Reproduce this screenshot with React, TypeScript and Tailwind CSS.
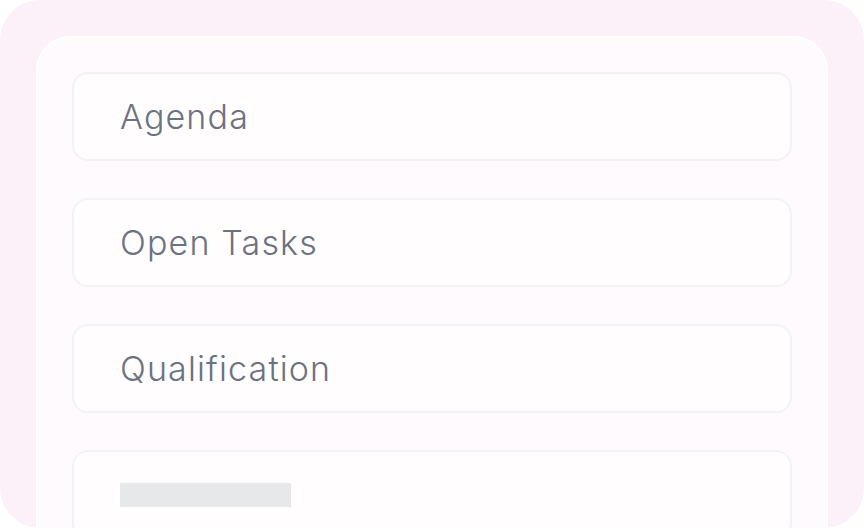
export default function App() {
  const items = ["Agenda", "Open Tasks", "Qualification"];

  return (
    <div className="w-[864px] h-[528px] bg-white overflow-hidden">
      <div className="h-full rounded-[40px] bg-[#fcf1f8] px-9 pt-9 overflow-hidden">
        <div className="h-full rounded-t-[34px] border-2 border-b-0 border-white bg-[#fefafd] px-[34px] pt-[34px] flex flex-col gap-[37px]">
          {items.map((label) => (
            <div key={label} className="h-[89px] shrink-0 flex items-center rounded-2xl border-2 border-[#f2f3f4] bg-[#fffdfe] pl-[46px]">
              <span className="text-[34px] leading-none font-[350] text-[#6b7280] font-['Inter',sans-serif] tracking-[1.15px]">
                {label}
              </span>
            </div>
          ))}
          {/* loading row */}
          <div className="h-[89px] shrink-0 flex items-center rounded-2xl border-2 border-[#f2f3f4] bg-[#fffdfe] pl-[46px]">
            <div className="w-[171px] h-6 bg-[#e6e8e9]" />
          </div>
        </div>
      </div>
    </div>
  );
}
